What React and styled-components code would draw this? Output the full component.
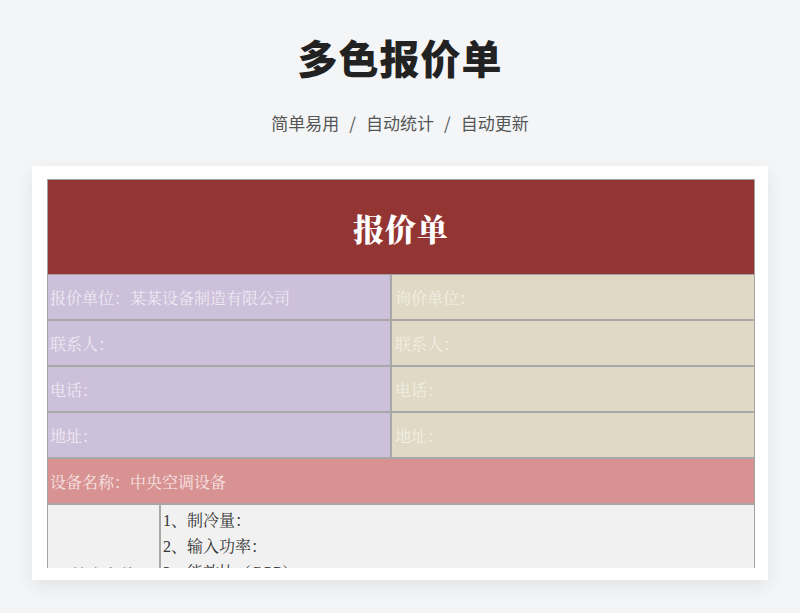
import React from 'react';
import styled, {createGlobalStyle} from 'styled-components';


// Styles
const GlobalStyle = createGlobalStyle`
    html, body {
        margin:0;
        padding:0;
        background-color:#f4f5f7;
    }
    body {
        font-family:"Noto Sans CJK SC", "Noto Sans", sans-serif;
    }
`

const Page = styled.div`
    width:800px;
    height:613px;
    display:flex;
    overflow:hidden;
    align-items:center;
    flex-direction:column;
`

const Title = styled.h1`
    margin:31px 0 0;
    color:#222;
    font-size:40px;
    font-weight:900;
    line-height:52px;
    letter-spacing:1px;
`

const Subtitle = styled.p`
    margin:27px 0 0;
    color:#555;
    font-size:17px;
    line-height:26px;
`

const Slash = styled.span`
    margin:0 10px;
`

const Card = styled.div`
    width:708px;
    margin-top:30px;
    padding:13px 13px 12px 15px;
    background-color:#fff;
    box-shadow:0 6px 18px rgba(0,0,0,0.08);
`

const Sheet = styled.div`
    height:388px;
    overflow:hidden;
    border-left:1px solid #a3a3a3;
    border-right:1px solid #a3a3a3;
    border-top:1px solid #a3a3a3;
    font-family:"Liberation Serif", "Noto Serif CJK SC", "Noto Sans CJK SC", serif;
`

const Banner = styled.div`
    height:94px;
    display:flex;
    align-items:center;
    justify-content:center;
    color:#fff;
    font-size:31px;
    font-weight:900;
    letter-spacing:1px;
    background-color:#933533;
    border-bottom:1px solid #a3a3a3;
`

const Row = styled.div`
    display:flex;
    border-bottom:2px solid #a8a8a8;
`

const Cell = styled.div`
    height:44px;
    display:flex;
    align-items:center;
    padding-left:${p => p.$pad || 2}px;
    font-size:16px;
    box-sizing:border-box;
    flex:${p => p.$w ? `0 0 ${p.$w}px` : '1'};
    color:${p => p.$ink};
    background-color:${p => p.$bg};
    border-right:${p => p.$split ? '2px solid #a8a8a8' : 'none'};
`

const SpecLabel = styled.div`
    flex:0 0 111px;
    display:flex;
    align-items:center;
    justify-content:center;
    color:#333;
    font-size:16px;
    background-color:#f1f1f1;
    border-right:2px solid #a8a8a8;
`

const SpecList = styled.div`
    flex:1;
    padding:3px 0 6px 2px;
    color:#333;
    font-size:16px;
    line-height:26px;
    background-color:#f1f1f1;
`


const parties = [
    ['报价单位：某某设备制造有限公司', '询价单位：'],
    ['联系人：', '联系人：'],
    ['电话：', '电话：'],
    ['地址：', '地址：'],
]

const specs = ['1、制冷量：', '2、输入功率：', '3、能效比（COP）', '4、噪音：', '5、外形尺寸：']


export default function App() {
    return (
        <Page>
            <GlobalStyle/>
            <Title>多色报价单</Title>
            <Subtitle>简单易用<Slash>/</Slash>自动统计<Slash>/</Slash>自动更新</Subtitle>
            <Card>
                <Sheet>
                    <Banner>报价单</Banner>
                    {parties.map(([left, right]) => (
                        <Row key={left}>
                            <Cell $w={344} $split $bg='#cdc0da' $ink='#efeaf3'>{left}</Cell>
                            <Cell $pad={3} $bg='#dfd9c6' $ink='#f3efe3'>{right}</Cell>
                        </Row>
                    ))}
                    <Row>
                        <Cell $bg='#d99292' $ink='#f5e4e4'>设备名称：中央空调设备</Cell>
                    </Row>
                    <Row>
                        <SpecLabel>技术参数</SpecLabel>
                        <SpecList>
                            {specs.map(s => <div key={s}>{s}</div>)}
                        </SpecList>
                    </Row>
                </Sheet>
            </Card>
        </Page>
    )
}
